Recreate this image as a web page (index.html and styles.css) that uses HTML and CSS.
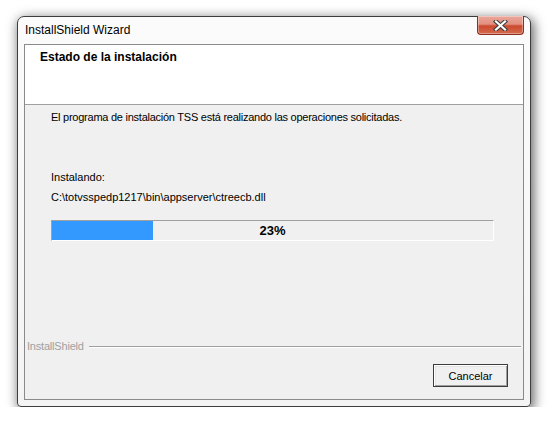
FILE: index.html
```html
<!DOCTYPE html>
<html lang="es">
<head>
<meta charset="utf-8">
<title>InstallShield Wizard</title>
<link rel="stylesheet" href="styles.css">
</head>
<body>
<div class="window">
  <div class="titlebar">
    <span class="title">InstallShield Wizard</span>
    <button class="close" aria-label="Cerrar">
      <svg width="15" height="11" viewBox="0 0 15 11">
        <path d="M3 1.5 L12 9.5 M12 1.5 L3 9.5" stroke="#3a3a3a" stroke-width="4.2" stroke-linecap="square" fill="none"/>
        <path d="M3 1.5 L12 9.5 M12 1.5 L3 9.5" stroke="#ffffff" stroke-width="2.2" stroke-linecap="square" fill="none"/>
      </svg>
    </button>
  </div>
  <div class="client">
    <div class="header">
      <div class="heading">Estado de la instalación</div>
    </div>
    <div class="content">
      <p class="msg">El programa de instalación TSS está realizando las operaciones solicitadas.</p>
      <p class="status">Instalando:</p>
      <p class="file">C:\totvsspedp1217\bin\appserver\ctreecb.dll</p>
      <div class="progress">
        <div class="fill" style="width:23%"></div>
        <span class="pct">23%</span>
      </div>
    </div>
    <div class="footer">
      <div class="brand"><span class="brand-name">InstallShield</span><span class="rule"></span></div>
      <div class="actions"><button class="btn">Cancelar</button></div>
    </div>
  </div>
</div>
</body>
</html>
```

FILE: styles.css
```css
html, body {
  margin: 0;
  padding: 0;
  background: #ffffff;
}
body {
  padding: 16px 0 0 17px;
  font-family: "Liberation Sans", Arial, sans-serif;
}
.window {
  width: 514px;
  height: 391px;
  box-sizing: border-box;
  border: 1px solid #3e3e3e;
  border-radius: 7px 7px 4px 4px;
  background: linear-gradient(#fbfbfb, #f4f4f4);
  box-shadow: 2px 3px 12px 1px rgba(0, 0, 0, 0.6);
  padding: 0 6px 6px 6px;
  display: flex;
  flex-direction: column;
}
.titlebar {
  height: 27px;
  display: flex;
  justify-content: space-between;
  align-items: flex-start;
}
.title {
  font-size: 12px;
  line-height: 27px;
  color: #000;
  padding-left: 1px;
}
.close {
  margin-top: -1px;
  width: 47px;
  height: 19px;
  padding: 0;
  border: 1px solid #8b2e1f;
  border-top: none;
  border-radius: 0 0 4px 4px;
  background: linear-gradient(#eba89c 0%, #e2907f 45%, #cc4a2f 55%, #d36a4e 100%);
  box-shadow: inset 0 0 0 1px rgba(255, 255, 255, 0.35);
  display: flex;
  align-items: center;
  justify-content: center;
}
.client {
  flex: 1;
  border: 1px solid #8a8a8a;
  background: #f0f0f0;
  display: flex;
  flex-direction: column;
}
.header {
  height: 60px;
  background: #ffffff;
  border-bottom: 1px solid #a0a0a0;
  padding: 5px 0 0 15px;
  box-sizing: border-box;
}
.heading {
  font-size: 12px;
  font-weight: bold;
  line-height: 14px;
  color: #000;
}
.content {
  flex: 1;
  padding: 6px 0 0 26px;
  font-size: 11px;
  line-height: 13px;
  color: #000;
}
.content p {
  margin: 0;
}
.msg {
  letter-spacing: -0.25px;
}
.status {
  margin-top: 47px !important;
}
.file {
  margin-top: 7px !important;
}
.progress {
  position: relative;
  margin-top: 16px;
  width: 443px;
  height: 21px;
  box-sizing: border-box;
  border-top: 1px solid #a0a0a0;
  border-left: 1px solid #a0a0a0;
  border-right: 1px solid #ffffff;
  border-bottom: 1px solid #ffffff;
  background: #f0f0f0;
  display: flex;
  align-items: stretch;
}
.fill {
  background: #3399ff;
}
.pct {
  position: absolute;
  inset: 0;
  display: flex;
  align-items: center;
  justify-content: center;
  font-size: 13px;
  font-weight: bold;
  color: #000;
}
.footer {
  display: flex;
  flex-direction: column;
  padding-bottom: 12px;
}
.brand {
  display: flex;
  align-items: center;
  padding: 0 2px 0 2px;
  font-size: 11px;
  line-height: 13px;
  color: #a0a0a0;
}
.brand-name {
  letter-spacing: -0.2px;
}
.rule {
  flex: 1;
  margin-left: 5px;
  border-top: 1px solid #a0a0a0;
  border-bottom: 1px solid #ffffff;
}
.actions {
  display: flex;
  justify-content: flex-end;
  padding: 11px 15px 0 0;
}
.btn {
  width: 75px;
  height: 23px;
  padding: 0;
  border: 1px solid #3c3c3c;
  background: #f0f0f0;
  box-shadow: inset 1px 1px 0 #ffffff, inset -1px -1px 0 #a0a0a0, inset 2px 2px 0 #e3e3e3;
  font-family: "Liberation Sans", Arial, sans-serif;
  font-size: 11px;
  color: #000;
}
```
